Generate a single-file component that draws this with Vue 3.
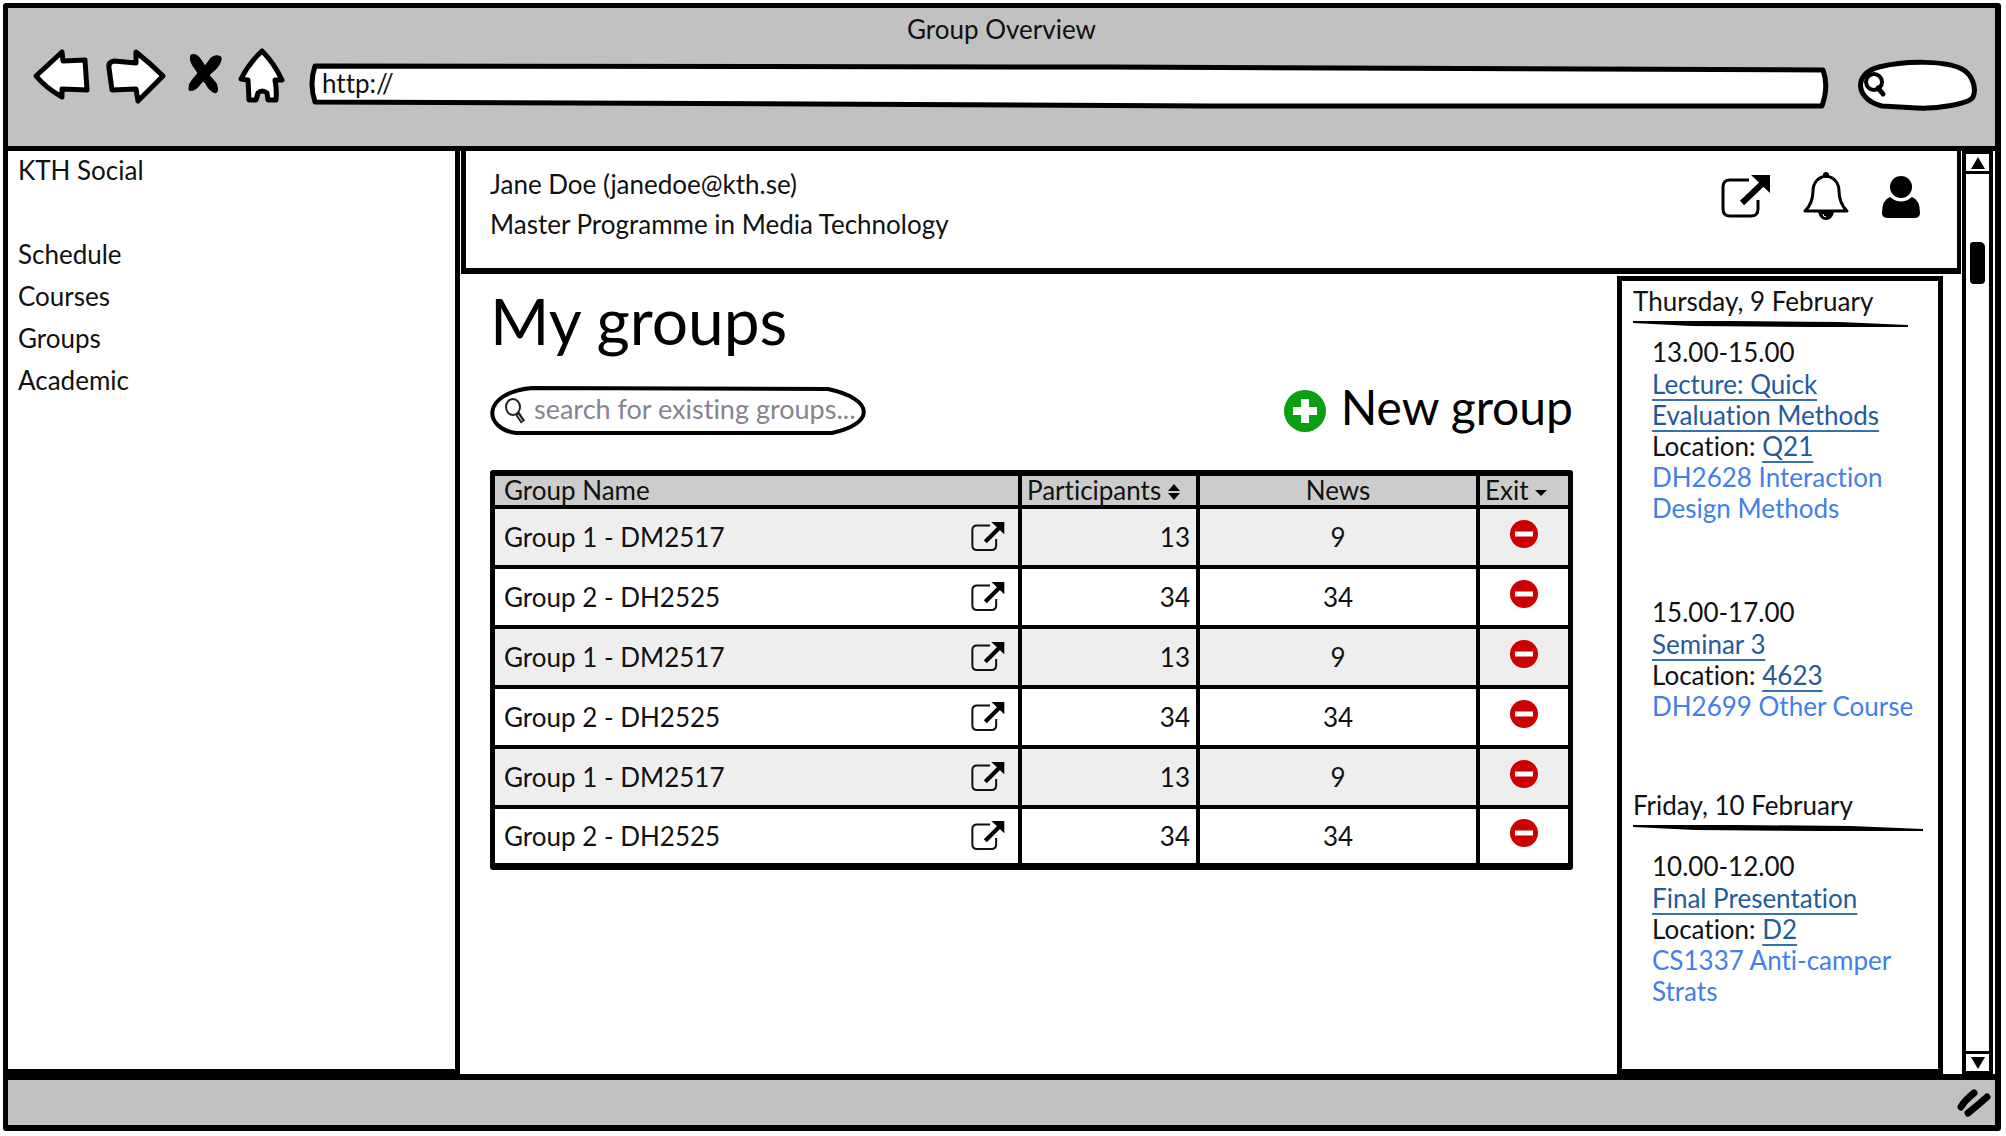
<script setup>
import { ref } from 'vue'

const address = ref('http://')
const webSearch = ref('')
const groupSearch = ref('')

const navLinks = ['Schedule', 'Courses', 'Groups', 'Academic']

const groups = [
  { id: 1, name: 'Group 1 - DM2517', participants: 13, news: 9 },
  { id: 2, name: 'Group 2 - DH2525', participants: 34, news: 34 },
  { id: 3, name: 'Group 1 - DM2517', participants: 13, news: 9 },
  { id: 4, name: 'Group 2 - DH2525', participants: 34, news: 34 },
  { id: 5, name: 'Group 1 - DM2517', participants: 13, news: 9 },
  { id: 6, name: 'Group 2 - DH2525', participants: 34, news: 34 },
]

const days = [
  {
    title: 'Thursday, 9 February',
    rule: 92,
    events: [
      {
        time: '13.00-15.00',
        title: 'Lecture: Quick Evaluation Methods',
        room: 'Q21',
        course: 'DH2628 Interaction Design Methods',
      },
      { time: '15.00-17.00', title: 'Seminar 3', room: '4623', course: 'DH2699 Other Course' },
    ],
  },
  {
    title: 'Friday, 10 February',
    rule: 97,
    events: [
      {
        time: '10.00-12.00',
        title: 'Final Presentation',
        room: 'D2',
        course: 'CS1337 Anti-camper Strats',
      },
    ],
  },
]
</script>

<template>
  <div class="window">
    <header class="toolbar">
      <p class="window-title">Group Overview</p>
      <div class="toolbar-row">
        <div class="nav-buttons">
          <button type="button" aria-label="Back">
            <svg class="glyph" width="58" height="54" viewBox="0 0 58 54">
              <path d="M4 28 L30 4 L31 13 L53 12 L55 42 L30 41 L30 49 Q14 40 4 28Z" />
            </svg>
          </button>
          <button type="button" aria-label="Forward">
            <svg class="glyph" width="60" height="56" viewBox="0 0 60 56">
              <path d="M2 20 Q1 14 7 13 L29 15 L29 4 Q44 16 56 28 L31 53 L29 41 L5 42Z" />
            </svg>
          </button>
          <button type="button" aria-label="Stop">
            <svg width="38" height="54" viewBox="-4 -1 38 54">
              <path d="M3 6 Q9 4 13 11 L17 17 L23 9 Q28 5 33 8 Q34 13 28 20 L21 26 L28 34 Q31 41 28 44 Q22 43 18 35 L15 32 L9 39 Q4 43 1 41 Q0 35 5 30 L10 24 L5 17 Q1 10 3 6Z" stroke="#000" stroke-width="1" />
            </svg>
          </button>
          <button type="button" aria-label="Home">
            <svg class="glyph" width="48" height="56" viewBox="0 0 48 56">
              <path d="M23 3 Q35 15 43 32 L36 32 Q38 42 37 52 L29 52 L28 45 Q23 41 19 45 L17 52 L10 52 L9 32 L2 31 Q10 15 23 3Z" />
            </svg>
          </button>
        </div>
        <label class="address">
          <svg class="outline" viewBox="0 0 1520 46" preserveAspectRatio="none" aria-hidden="true">
            <path d="M5 2 L800 3 L1514 6 Q1520 22 1513 42 L900 42 L500 40 L5 38 Q-1 20 5 2Z" />
          </svg>
          <input v-model="address" type="text" aria-label="Address" />
        </label>
        <label class="web-search">
          <svg class="outline" viewBox="0 0 120 50" preserveAspectRatio="none" aria-hidden="true">
            <path d="M25 46 C-1 40 -5 14 22 7 C50 0 90 1 105 9 C115 14 120 28 116 37 C112 44 80 49 60 48Z" />
          </svg>
          <svg class="lens" width="24" height="26" viewBox="0 0 24 26" aria-hidden="true">
            <circle cx="10" cy="10" r="8" fill="none" stroke="#000" stroke-width="4" />
            <path d="M14 16 L19 22" fill="none" stroke="#000" stroke-width="5" stroke-linecap="round" />
          </svg>
          <input v-model="webSearch" type="text" aria-label="Web search" />
        </label>
      </div>
    </header>

    <div class="body">
      <nav class="sidebar">
        <p class="brand">KTH Social</p>
        <ul>
          <li v-for="link in navLinks" :key="link">
            <a href="#">{{ link }}</a>
          </li>
        </ul>
      </nav>

      <div class="page">
        <div class="profile">
          <div>
            <p>Jane Doe (janedoe@kth.se)</p>
            <p>Master Programme in Media Technology</p>
          </div>
          <div class="profile-actions">
            <button type="button" aria-label="Open">
              <svg width="50" height="44" viewBox="0 0 50 44">
                <path d="M28 5 H9 Q2 5 2 12 V34 Q2 41 9 41 H30 Q37 41 37 34 V25" fill="none" stroke="#000" stroke-width="3" />
                <path d="M21 28 L42 8" stroke="#000" stroke-width="6" />
                <path d="M30 0 H49 V18 Z" />
              </svg>
            </button>
            <button type="button" aria-label="Notifications">
              <svg width="46" height="50" viewBox="0 0 46 50">
                <path d="M23 4 C15 5 10 11 10 19 C10 29 7 34 2 39 H44 C39 34 36 29 36 19 C36 11 31 5 23 4Z" fill="none" stroke="#000" stroke-width="3" stroke-linejoin="round" />
                <circle cx="23" cy="3" r="3" />
                <path d="M15 40 H31 Q29 48 23 48 Q17 48 15 40Z" />
                <path d="M20 42 Q20 45 23 45" fill="none" stroke="#fff" />
              </svg>
            </button>
            <button type="button" aria-label="Account">
              <svg width="40" height="44" viewBox="0 0 40 44">
                <circle cx="20" cy="12" r="11" />
                <path d="M9 22 Q20 31 31 22 Q39 25 39 38 Q39 43 33 43 H7 Q1 43 1 38 Q1 25 9 22Z" />
              </svg>
            </button>
          </div>
        </div>

        <div class="columns">
          <main class="groups">
            <h1>My groups</h1>
            <div class="actions">
              <label class="group-search">
                <svg class="outline thin" viewBox="0 0 376 50" preserveAspectRatio="none" aria-hidden="true">
                  <path d="M42 2 L338 3 C385 13 385 38 342 47 L200 47 L26 47 C-6 43 -10 7 42 2Z" />
                </svg>
                <svg class="lens" width="22" height="26" viewBox="0 0 22 26" aria-hidden="true">
                  <ellipse cx="9" cy="9" rx="7" ry="8" fill="none" stroke="#222" stroke-width="2" />
                  <path d="M13 15 L19 24" stroke="#222" stroke-width="5" />
                  <path d="M14 17 L18 23" stroke="#fff" stroke-width="1" />
                </svg>
                <input v-model="groupSearch" type="text" placeholder="search for existing groups..." aria-label="Search for existing groups" />
              </label>
              <button type="button" class="new-group">
                <svg width="42" height="42" viewBox="0 0 42 42" aria-hidden="true">
                  <circle cx="21" cy="21" r="21" fill="#0a9f12" />
                  <path d="M21 9 V33 M9 21 H33" stroke="#fff" stroke-width="8" />
                </svg>
                <span>New group</span>
              </button>
            </div>

            <table>
              <colgroup>
                <col />
                <col class="col-participants" />
                <col class="col-news" />
                <col class="col-exit" />
              </colgroup>
              <thead>
                <tr>
                  <th scope="col">Group Name</th>
                  <th scope="col" class="sortable">
                    Participants
                    <svg width="12" height="16" viewBox="0 0 12 16" aria-hidden="true">
                      <path d="M0 7 L6 0 L12 7Z M0 9 L6 16 L12 9Z" />
                    </svg>
                  </th>
                  <th scope="col" class="news">News</th>
                  <th scope="col" class="sortable">
                    Exit
                    <svg width="12" height="16" viewBox="0 0 12 16" aria-hidden="true">
                      <path d="M0 6 H12 L6 12Z" />
                    </svg>
                  </th>
                </tr>
              </thead>
              <tbody>
                <tr v-for="group in groups" :key="group.id">
                  <td>
                    <div class="name">
                      <span>{{ group.name }}</span>
                      <a href="#" :aria-label="'Open ' + group.name">
                        <svg width="34" height="30" viewBox="0 0 50 44">
                          <path d="M28 5 H9 Q2 5 2 12 V34 Q2 41 9 41 H30 Q37 41 37 34 V25" fill="none" stroke="#111" stroke-width="3" />
                          <path d="M21 29 L42 8" stroke="#000" stroke-width="6" />
                          <path d="M30 0 H49 V18 Z" />
                        </svg>
                      </a>
                    </div>
                  </td>
                  <td class="participants">{{ group.participants }}</td>
                  <td class="news">{{ group.news }}</td>
                  <td class="exit">
                    <button type="button" :aria-label="'Leave ' + group.name">
                      <svg width="28" height="28" viewBox="0 0 28 28">
                        <circle cx="14" cy="14" r="14" fill="#cc0000" />
                        <path d="M5 14 H23" stroke="#fff" stroke-width="5" />
                      </svg>
                    </button>
                  </td>
                </tr>
              </tbody>
            </table>
          </main>

          <aside class="agenda">
            <section v-for="day in days" :key="day.title" class="day">
              <h2>{{ day.title }}</h2>
              <svg class="rule" :style="{ width: day.rule + '%' }" viewBox="0 0 280 7" preserveAspectRatio="none" aria-hidden="true">
                <path d="M0 0 L100 0 L210 1 L280 4 L280 6 L180 6 L60 5 L0 2Z" />
              </svg>
              <div class="events">
                <article v-for="event in day.events" :key="event.time">
                  <p class="time">{{ event.time }}</p>
                  <p><a href="#">{{ event.title }}</a></p>
                  <p>Location: <a href="#">{{ event.room }}</a></p>
                  <p class="course">{{ event.course }}</p>
                </article>
              </div>
            </section>
          </aside>
        </div>
      </div>

      <div class="scrollbar">
        <button type="button" class="up" aria-label="Scroll up">
          <svg width="14" height="12" viewBox="0 0 14 12"><path d="M7 0 L14 12 H0Z" /></svg>
        </button>
        <div class="track"><div class="thumb"></div></div>
        <button type="button" class="down" aria-label="Scroll down">
          <svg width="14" height="12" viewBox="0 0 14 12"><path d="M0 0 H14 L7 12Z" /></svg>
        </button>
      </div>
    </div>

    <footer class="statusbar">
      <svg width="34" height="28" viewBox="0 0 34 28" aria-hidden="true">
        <path d="M4 18 Q7 12 17 4 M11 24 Q20 17 30 8" fill="none" stroke="#000" stroke-width="7" stroke-linecap="round" />
      </svg>
    </footer>
  </div>
</template>

<style>
body {
  margin: 0;
  background: #fff;
}
</style>

<style scoped>
* {
  box-sizing: border-box;
}

.window {
  display: flex;
  flex-direction: column;
  min-height: calc(100vh - 8px);
  margin: 3px 5px 5px 3px;
  border: 5px solid #000;
  border-width: 5px 6px 6px 5px;
  border-radius: 3px;
  background: #fff;
  color: #111;
  font-family: Lato, "Noto Sans", sans-serif;
  font-size: 26px;
  font-variant-ligatures: none;
  line-height: 31px;
}

p,
h1,
h2,
ul {
  margin: 0;
  padding: 0;
  font-weight: 400;
}

ul {
  list-style: none;
}

svg {
  display: block;
  flex: none;
}

button {
  display: block;
  padding: 0;
  border: 0;
  background: none;
  color: inherit;
  font: inherit;
  cursor: pointer;
}

input {
  width: 100%;
  height: 100%;
  border: 0;
  outline: 0;
  background: transparent;
  color: inherit;
  font: inherit;
  font-variant-ligatures: none;
}

/* Browser chrome */
.toolbar {
  padding-bottom: 36px;
  border-bottom: 5px solid #000;
  background: #c1c1c1;
}

.window-title {
  margin-bottom: -2px;
  line-height: 42px;
  text-align: center;
}

.toolbar-row {
  display: flex;
  height: 62px;
  padding: 0 18px 0 24px;
}

.nav-buttons {
  display: flex;
  align-items: flex-start;
  gap: 17px;
  margin-right: 23px;
}

.glyph {
  fill: #fff;
  stroke: #000;
  stroke-width: 5;
  stroke-linejoin: round;
  overflow: visible;
}

.address,
.web-search,
.group-search {
  position: relative;
  display: flex;
  align-items: center;
}

.outline {
  position: absolute;
  inset: 0;
  width: 100%;
  height: 100%;
  overflow: visible;
  fill: #fff;
  stroke: #000;
  stroke-width: 5;
  stroke-linejoin: round;
}

.thin {
  stroke-width: 4;
}

.outline path {
  vector-effect: non-scaling-stroke;
}

.lens,
.address input,
.web-search input,
.group-search input {
  position: relative;
}

.address {
  flex: 1;
  align-self: flex-end;
  height: 46px;
  padding: 0 12px;
}

.address input {
  padding: 0 0 8px;
}

.web-search {
  align-self: flex-end;
  width: 120px;
  height: 50px;
  margin-left: 28px;
  padding: 0 12px 0 7px;
}

/* Page body */
.body {
  display: flex;
  flex: 1;
}

.sidebar {
  flex: none;
  width: 452px;
  padding-left: 10px;
  border-right: 5px solid #000;
  border-bottom: 5px solid #000;
}

.brand {
  line-height: 38px;
}

.sidebar ul {
  margin-top: 44px;
}

.sidebar li {
  line-height: 42px;
}

.sidebar a {
  color: inherit;
  text-decoration: none;
}

.page {
  display: flex;
  flex: 1;
  flex-direction: column;
  min-width: 0;
}

.profile {
  display: flex;
  justify-content: space-between;
  margin: 0 1px;
  padding: 13px 36px 24px 24px;
  border: solid #000;
  border-width: 0 4px 6px 5px;
  line-height: 40px;
}

.profile-actions {
  display: flex;
  align-items: center;
  align-self: flex-start;
  gap: 32px;
  padding-top: 8px;
}

.columns {
  display: flex;
  flex: 1;
}

.groups {
  flex: 1;
  min-width: 0;
  padding: 11px 44px 40px 30px;
}

h1 {
  color: #000;
  font-size: 64px;
  line-height: 72px;
}

.actions {
  display: flex;
  align-items: center;
  justify-content: space-between;
  height: 50px;
  margin: 29px 0 34px;
}

.group-search {
  width: 376px;
  height: 50px;
  padding: 0 4px 0 14px;
  gap: 8px;
}

.group-search input {
  padding: 0 0 5px;
  font-size: 27px;
}

.group-search input::placeholder {
  color: #85858f;
  opacity: 1;
}

.new-group {
  display: flex;
  align-items: center;
  gap: 15px;
  color: #000;
  font-size: 48px;
  line-height: 48px;
}

.new-group span {
  padding-bottom: 8px;
}

table {
  width: 100%;
  border: solid #000;
  border-width: 6px 5px 7px;
  border-radius: 3px;
  border-spacing: 0;
  table-layout: fixed;
}

.col-participants {
  width: 178px;
}

.col-news {
  width: 280px;
}

.col-exit {
  width: 88px;
}

th,
td {
  padding: 0 6px 0 9px;
  border: solid #000;
  border-width: 0 4px 4px 0;
  font-weight: 400;
  text-align: left;
}

th {
  height: 33px;
  padding: 0 0 0 9px;
  background: #ccc;
  line-height: 29px;
}

th:last-child,
td:last-child {
  border-right: 0;
}

td {
  height: 60px;
}

tbody tr:nth-child(odd) {
  background: #eee;
}

tbody tr:last-child td {
  height: 54px;
  border-bottom: 0;
}

th.news,
td.news {
  padding: 0;
  text-align: center;
}

th.sortable {
  padding-left: 5px;
  white-space: nowrap;
}

.sortable svg {
  display: inline-block;
}

.name {
  display: flex;
  align-items: center;
  justify-content: space-between;
  padding-right: 7px;
}

td.participants {
  text-align: right;
}

td.exit {
  padding: 0 0 6px;
}

.exit button {
  margin: 0 auto;
}

/* Schedule column */
.agenda {
  flex: none;
  width: 326px;
  margin: 2px 19px 0 0;
  padding: 0 6px 0 11px;
  border: 5px solid #000;
}

.day + .day {
  margin-top: 63px;
}

h2 {
  font-size: 26px;
  line-height: 40px;
}

.rule {
  height: 7px;
}

.events {
  margin-top: 7px;
  padding-left: 19px;
}

.day + .day .events {
  margin-top: 17px;
}

article + article {
  margin-top: 71px;
}

.time {
  line-height: 34px;
}

.agenda a {
  color: #245a9c;
  text-decoration: underline #3572ad 2px;
  text-underline-offset: 5px;
  text-decoration-skip-ink: none;
}

.course {
  color: #3f80ea;
}

/* Scrollbar */
.scrollbar {
  display: flex;
  flex: none;
  flex-direction: column;
  width: 33px;
  padding-right: 2px;
}

.up,
.down {
  display: flex;
  align-items: center;
  justify-content: center;
  height: 23px;
  border: solid #000;
  border-width: 3px 4px;
}

.track {
  flex: 1;
  padding: 68px 4px 0;
  border: solid #000;
  border-width: 0 4px;
}

.thumb {
  width: 15px;
  height: 42px;
  border-radius: 3px 5px 4px 4px;
  background: #000;
}

.statusbar {
  display: flex;
  align-items: center;
  justify-content: flex-end;
  height: 51px;
  padding-right: 4px;
  border-top: 6px solid #000;
  background: #c1c1c1;
}
</style>
